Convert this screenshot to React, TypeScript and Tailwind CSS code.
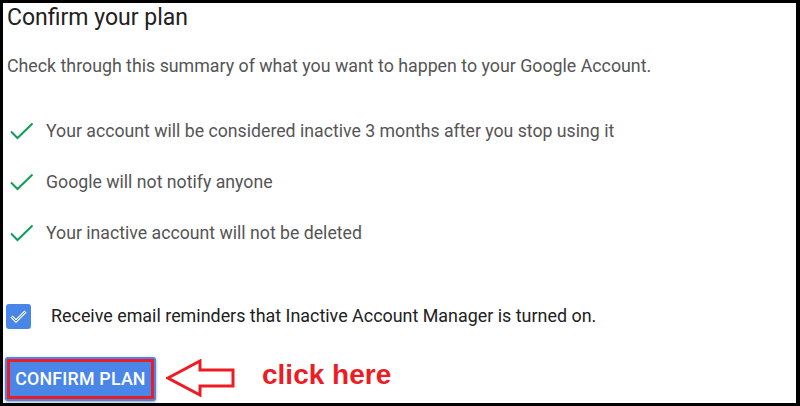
const items = [
  "Your account will be considered inactive 3 months after you stop using it",
  "Google will not notify anyone",
  "Your inactive account will not be deleted",
];

function Check() {
  return (
    <svg width="24" height="18" viewBox="0 0 24 18" className="shrink-0">
      <path d="M1 9.5 L7.5 16 L22.5 1.5" fill="none" stroke="#0f9d58" strokeWidth="2" />
    </svg>
  );
}

function Arrow() {
  return (
    <svg width="70" height="38" viewBox="0 0 70 38" className="shrink-0">
      <path
        d="M2 19 L34 2 L34 11 L67 11 L67 27 L34 27 L34 36 Z"
        fill="none"
        stroke="#ed1c24"
        strokeWidth="3"
      />
    </svg>
  );
}

export default function App() {
  return (
    <div
      className="w-[800px] h-[406px] bg-white border-black border-t-[3px] border-l-[3px] border-r-[4px] border-b-[3px] flex flex-col"
      style={{ fontFamily: "Roboto, 'Liberation Sans', sans-serif" }}
    >
      <h1 className="ml-[4px] mt-[1px] text-[23px] leading-[28px] text-[#212121]">Confirm your plan</h1>
      <p className="ml-[4px] mt-[22px] text-[17.8px] leading-[24px] text-[#555]">
        Check through this summary of what you want to happen to your Google Account.
      </p>
      <ul className="mt-[41px] flex flex-col gap-[27px]">
        {items.map((t) => (
          <li key={t} className="flex items-center gap-[12px] pl-[7px] h-[24px]">
            <Check />
            <span className="text-[17.7px] text-[#555]">{t}</span>
          </li>
        ))}
      </ul>
      <div className="mt-[58px] ml-[3px] flex items-center gap-[20px]">
        <div className="w-[25px] h-[25px] rounded-[3px] bg-[#4a86e8] flex items-center justify-center">
          <svg width="17" height="13" viewBox="0 0 17 13">
            <path d="M1.5 6.5 L6 11 L15.5 1.5" fill="none" stroke="#fff" strokeWidth="3" />
            <path d="M1.5 6.5 L6 11 L15.5 1.5" fill="none" stroke="#4a86e8" strokeWidth="1" />
          </svg>
        </div>
        <span className="text-[17.9px] text-[#212121]">
          Receive email reminders that Inactive Account Manager is turned on.
        </span>
      </div>
      <div className="mt-[27px] ml-[2px] flex items-center">
        <button className="w-[151px] h-[44px] rounded-[3px] bg-[#4a86e8] shadow-[0_1px_3px_rgba(0,0,0,0.4)] p-[2px]">
          <div className="w-full h-full border-[3px] border-[#ed1c24] flex items-center justify-center text-white text-[17.8px] font-medium tracking-[0.2px]">
            CONFIRM PLAN
          </div>
        </button>
        <div className="ml-[10px] -mt-[2px]">
          <Arrow />
        </div>
        <span
          className="ml-[26px] -mt-[8px] text-[#ed1c24] text-[28px] font-bold leading-none"
          style={{ fontFamily: "'Liberation Sans', Arial, sans-serif" }}
        >
          click here
        </span>
      </div>
    </div>
  );
}
